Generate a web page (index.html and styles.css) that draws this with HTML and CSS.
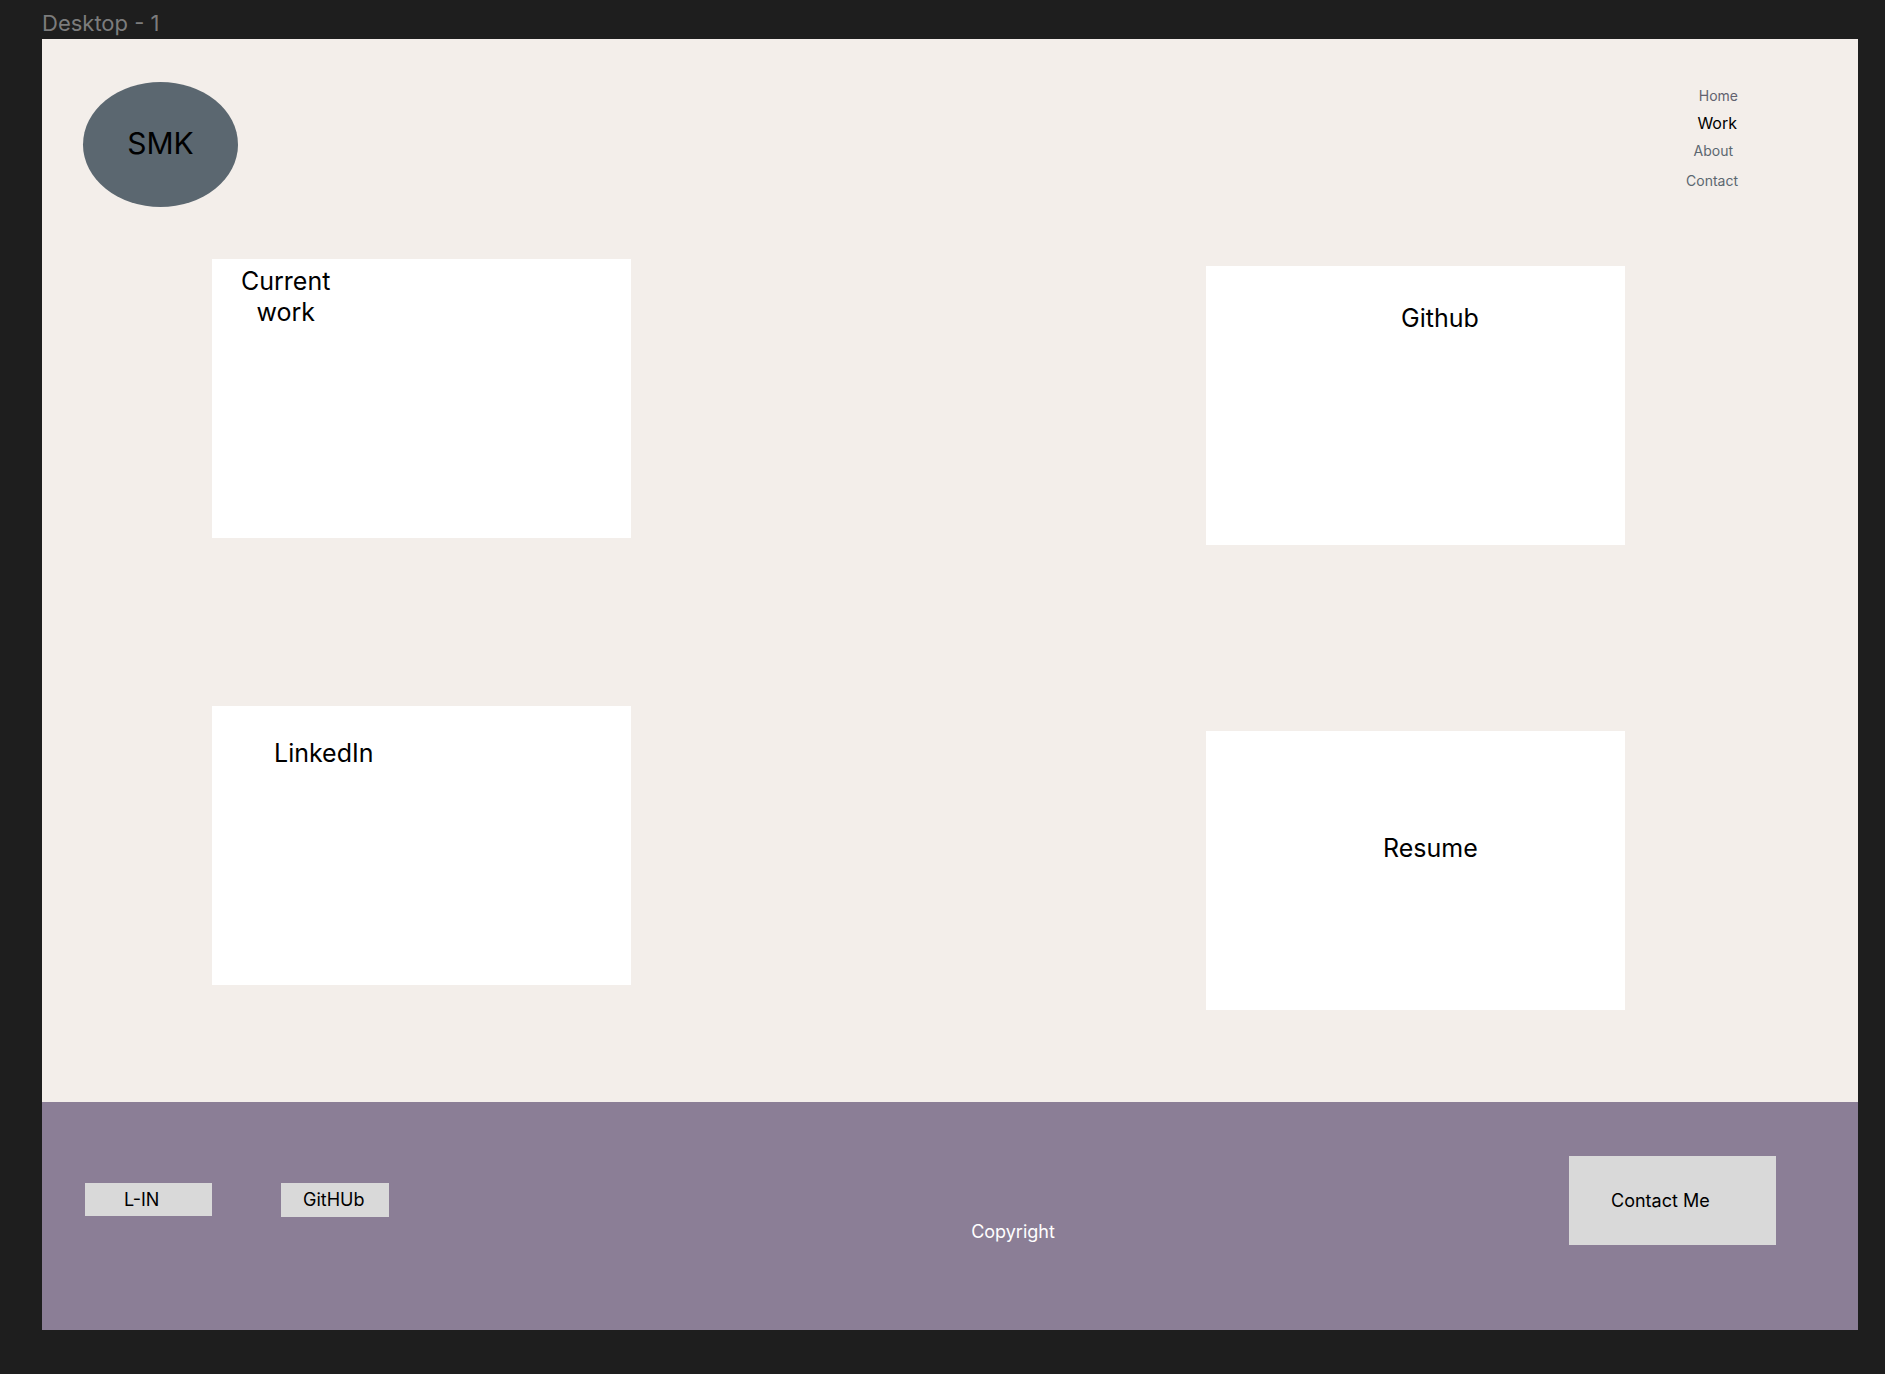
FILE: index.html
```html
<!DOCTYPE html>
<html lang="en">
<head>
<meta charset="utf-8">
<meta name="viewport" content="width=device-width, initial-scale=1">
<title>Desktop - 1</title>
<link rel="stylesheet" href="styles.css">
</head>
<body class="canvas">
<p class="frame-label">Desktop - 1</p>
<div class="frame">
  <header class="header">
    <a class="logo" href="#home">SMK</a>
    <nav class="nav">
      <a class="nav-link nav-link-home" href="#home">Home</a>
      <a class="nav-link nav-link-current" href="#work" aria-current="page">Work</a>
      <a class="nav-link nav-link-about" href="#about">About</a>
      <a class="nav-link nav-link-contact" href="#contact">Contact</a>
    </nav>
  </header>
  <main class="work">
    <div class="column column-left">
      <section class="card card-current"><h2 class="card-title">Current<br>work</h2></section>
      <section class="card card-linkedin"><h2 class="card-title">LinkedIn</h2></section>
    </div>
    <div class="column column-right">
      <section class="card card-github"><h2 class="card-title">Github</h2></section>
      <section class="card card-resume"><h2 class="card-title">Resume</h2></section>
    </div>
  </main>
  <footer class="footer">
    <div class="socials">
      <a class="tile tile-linkedin" href="#linkedin">L-IN</a>
      <a class="tile tile-github" href="#github">GitHUb</a>
    </div>
    <p class="copyright">Copyright</p>
    <button class="tile tile-contact" type="button">Contact Me</button>
  </footer>
</div>
</body>
</html>
```
FILE: styles.css
```css
* {
  box-sizing: border-box;
}

.canvas {
  margin: 0;
  padding: 0 27px 44px 42px;
  background: #1e1e1e;
  color: #000;
  font-family: Inter, "Liberation Sans", sans-serif;
}

.frame-label {
  margin: 0;
  padding-top: 8px;
  color: #7c7c7c;
  font-size: 22px;
  line-height: 31px;
}

.frame {
  background: #f3eeea;
}

.header {
  display: flex;
  justify-content: space-between;
  align-items: flex-start;
  padding: 43px 120px 0 41px;
}

.logo {
  width: 155px;
  height: 125px;
  border-radius: 50%;
  background: #5b6770;
  color: #000;
  font-size: 30px;
  line-height: 122px;
  text-align: center;
  text-decoration: none;
}

.nav {
  display: flex;
  flex-direction: column;
  align-items: flex-end;
}

.nav-link {
  color: #5b6770;
  font-size: 14px;
  line-height: 28px;
  text-decoration: none;
}

.nav-link-home {
  color: #62626f;
}

.nav-link-current {
  padding-right: 1px;
  color: #000;
  font-size: 16px;
  line-height: 26px;
}

.nav-link-about {
  padding: 1px 5px 0 0;
}

.nav-link-contact {
  padding-top: 2px;
}

.work {
  display: flex;
  justify-content: space-between;
  padding: 52px 233px 92px 170px;
}

.column {
  display: flex;
  flex-direction: column;
}

.column-left {
  gap: 168px;
}

.column-right {
  gap: 186px;
  padding-top: 7px;
}

.card {
  width: 419px;
  height: 279px;
  background: #fff;
}

.card-title {
  width: max-content;
  margin: 0;
  font-size: 25px;
  font-weight: 400;
  line-height: 31px;
  text-align: center;
}

.card-current {
  padding: 7px 29px;
}

.card-linkedin {
  padding: 32px 62px;
}

.card-github {
  padding: 37px 195px;
}

.card-resume {
  padding: 102px 177px;
}

.footer {
  display: flex;
  align-items: center;
  padding: 54px 82px 85px 43px;
  background: #8b7e96;
}

.socials {
  display: flex;
  align-items: flex-start;
  gap: 69px;
  margin-bottom: 1px;
}

.tile {
  background: #d9d9d9;
  color: #000;
  font-family: inherit;
  font-size: 18px;
  line-height: 33px;
  text-align: left;
  text-decoration: none;
}

.tile-linkedin {
  width: 127px;
  padding-left: 39px;
}

.tile-github {
  width: 108px;
  padding: 0 0 1px 22px;
}

.tile-contact {
  width: 207px;
  height: 89px;
  padding: 0 0 0 42px;
  border: 0;
}

.copyright {
  flex: 1;
  align-self: flex-end;
  margin: 0;
  padding-left: 68px;
  color: #fff;
  font-size: 18px;
  line-height: 26px;
  text-align: center;
}
```
